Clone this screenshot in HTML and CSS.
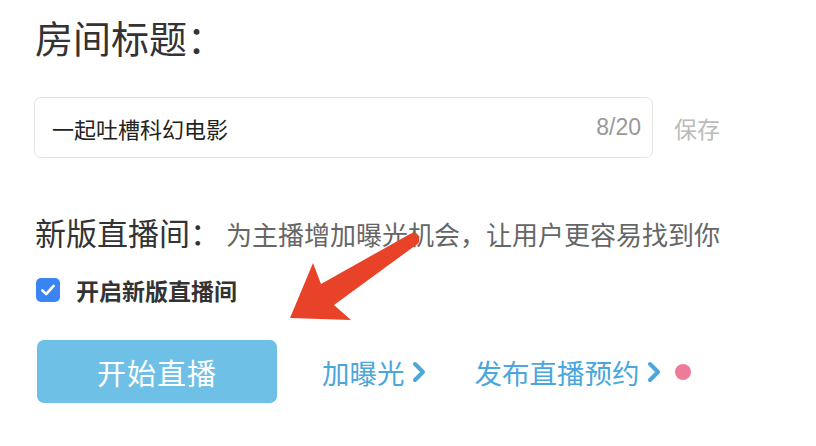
FILE: index.html
```html
<!DOCTYPE html>
<html lang="zh-CN">
<head>
<meta charset="UTF-8">
<meta name="viewport" content="width=device-width, initial-scale=1.0">
<title>直播设置</title>
<link rel="stylesheet" href="styles.css">
</head>
<body>
  <div class="page">
    <h1 class="field-title">房间标题：</h1>

    <div class="title-row">
      <div class="title-input">
        <span class="title-value">一起吐槽科幻电影</span>
        <span class="title-count">8/20</span>
      </div>
      <span class="save-btn">保存</span>
    </div>

    <div class="section-head">
      <span class="section-name">新版直播间：</span>
      <span class="section-desc">为主播增加曝光机会，让用户更容易找到你</span>
    </div>

    <label class="check-row">
      <span class="checkbox">
        <svg viewBox="0 0 24 24" width="18" height="18"><path d="M4.5 12.5l5 5 10-11" fill="none" stroke="#fff" stroke-width="3.6" stroke-linecap="round" stroke-linejoin="round"/></svg>
      </span>
      开启新版直播间
    </label>

    <div class="actions">
      <button class="start-btn">开始直播</button>
      <a class="link" href="#">加曝光<svg class="chev" viewBox="0 0 16 24" width="16" height="24"><path d="M4 4l8 8-8 8" fill="none" stroke="currentColor" stroke-width="4" stroke-linecap="round" stroke-linejoin="round"/></svg></a>
      <a class="link link-wide" href="#">发布直播预约<svg class="chev" viewBox="0 0 16 24" width="16" height="24"><path d="M4 4l8 8-8 8" fill="none" stroke="currentColor" stroke-width="4" stroke-linecap="round" stroke-linejoin="round"/></svg></a>
      <span class="dot"></span>
    </div>
  </div>

  <!-- 标注箭头 -->
  <svg class="annot-arrow" width="816" height="446" viewBox="0 0 816 446">
    <path d="M290 318 L313 263 L321 284 L410 234 Q417 231 419 238 Q420 243 416 245 L334 305 L351 320 Z" fill="#e84229"/>
  </svg>
</body>
</html>
```

FILE: styles.css
```css
body {
  margin: 0;
  background: #fff;
  font-family: "Noto Sans CJK SC", "Liberation Sans", sans-serif;
  color: #333;
}

.page {
  position: relative;
  width: 816px;
  height: 446px;
  padding: 15px 0 0 35px;
  box-sizing: border-box;
  overflow: hidden;
}

.field-title {
  margin: 0;
  font-size: 38px;
  font-weight: normal;
  line-height: 44px;
  color: #333;
}

.title-row {
  display: flex;
  align-items: center;
  margin-top: 38px;
}

.title-input {
  display: flex;
  align-items: center;
  justify-content: space-between;
  width: 619px;
  height: 61px;
  margin-left: -1px;
  padding: 0 11px 0 17px;
  border: 1px solid #e3e3e3;
  border-radius: 7px;
  box-sizing: border-box;
}

.title-value {
  font-size: 22px;
  color: #222;
}

.title-count {
  font-family: "Liberation Sans", Arial, sans-serif;
  font-size: 23px;
  color: #999;
}

.save-btn {
  margin-left: 21px;
  font-size: 23px;
  color: #bbb;
}

.section-head {
  display: flex;
  align-items: baseline;
  margin-top: 56px;
  height: 36px;
  line-height: 36px;
}

.section-name {
  font-size: 31px;
  color: #333;
}

.section-desc {
  margin-left: 5px;
  font-size: 26px;
  color: #666;
}

.check-row {
  display: flex;
  align-items: center;
  margin-top: 28px;
  height: 24px;
  font-size: 23px;
  font-weight: bold;
  color: #333;
}

.checkbox {
  display: flex;
  align-items: center;
  justify-content: center;
  width: 24px;
  height: 24px;
  margin-left: 1px;
  margin-right: 16px;
  border-radius: 5px;
  background: #3a84f3;
}

.actions {
  display: flex;
  align-items: center;
  margin-top: 38px;
}

.start-btn {
  width: 240px;
  height: 63px;
  margin-left: 2px;
  border: none;
  border-radius: 7px;
  background: #6ec0e6;
  color: #fff;
  font-family: inherit;
  font-size: 29px;
  letter-spacing: 1px;
}

.link {
  display: flex;
  align-items: center;
  margin-left: 45px;
  font-size: 27.5px;
  color: #4aa6db;
  text-decoration: none;
}

.link-wide {
  margin-left: 48px;
}

.chev {
  margin-left: 6px;
}

.dot {
  width: 16px;
  height: 16px;
  margin-left: 13px;
  border-radius: 50%;
  background: #ec7c98;
}

.annot-arrow {
  position: absolute;
  left: 0;
  top: 0;
  pointer-events: none;
}
```
